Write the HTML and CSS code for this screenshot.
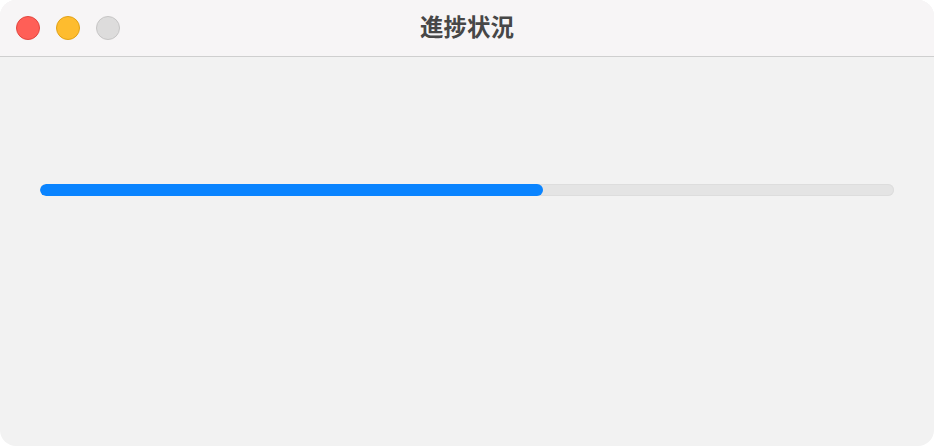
FILE: index.html
```html
<html>
  <head>
    <title>進捗状況</title>
    <link rel="stylesheet" href="styles.css">
  </head>
  <body>
    <div class="window">
      <div class="titlebar">
        <div class="lights">
          <span class="light close"></span>
          <span class="light minimize"></span>
          <span class="light zoom"></span>
        </div>
        <h3 class="title">進捗状況</h3>
      </div>
      <div class="content">
        <div class="track">
          <div class="fill" style="width: 58.9%"></div>
        </div>
      </div>
    </div>
  </body>
</html>
```

FILE: styles.css
```css
body {
  margin: 0;
  background: #ffffff;
  font-family: "Noto Sans CJK JP", "Noto Sans", sans-serif;
}

.window {
  width: 934px;
  height: 446px;
  border-radius: 16px;
  overflow: hidden;
  background: #f2f2f2;
  display: flex;
  flex-direction: column;
}

.titlebar {
  height: 56px;
  background: #f7f5f6;
  border-bottom: 1px solid #cfcfcf;
  display: flex;
  align-items: center;
  position: relative;
}

.lights {
  display: flex;
  gap: 16px;
  padding-left: 16px;
}

.light {
  width: 22px;
  height: 22px;
  border-radius: 50%;
  border: 1px solid transparent;
}

.close {
  background: #ff5f57;
  border-color: #e2463f;
}

.minimize {
  background: #febc2e;
  border-color: #e1a116;
}

.zoom {
  background: #dddcdc;
  border-color: #c6c5c5;
}

.title {
  position: absolute;
  left: 0;
  right: 0;
  top: 9px;
  margin: 0;
  line-height: 34px;
  text-align: center;
  font-size: 23.5px;
  font-weight: 700;
  color: #474747;
  pointer-events: none;
}

.content {
  flex: 1;
  padding: 127px 40px 0 40px;
}

.track {
  height: 12px;
  border-radius: 6px;
  background: #e4e4e4;
  box-shadow: inset 0 0 0 1px #dddddd;
  overflow: hidden;
}

.fill {
  height: 100%;
  border-radius: 6px;
  background: #0a84ff;
}
```
